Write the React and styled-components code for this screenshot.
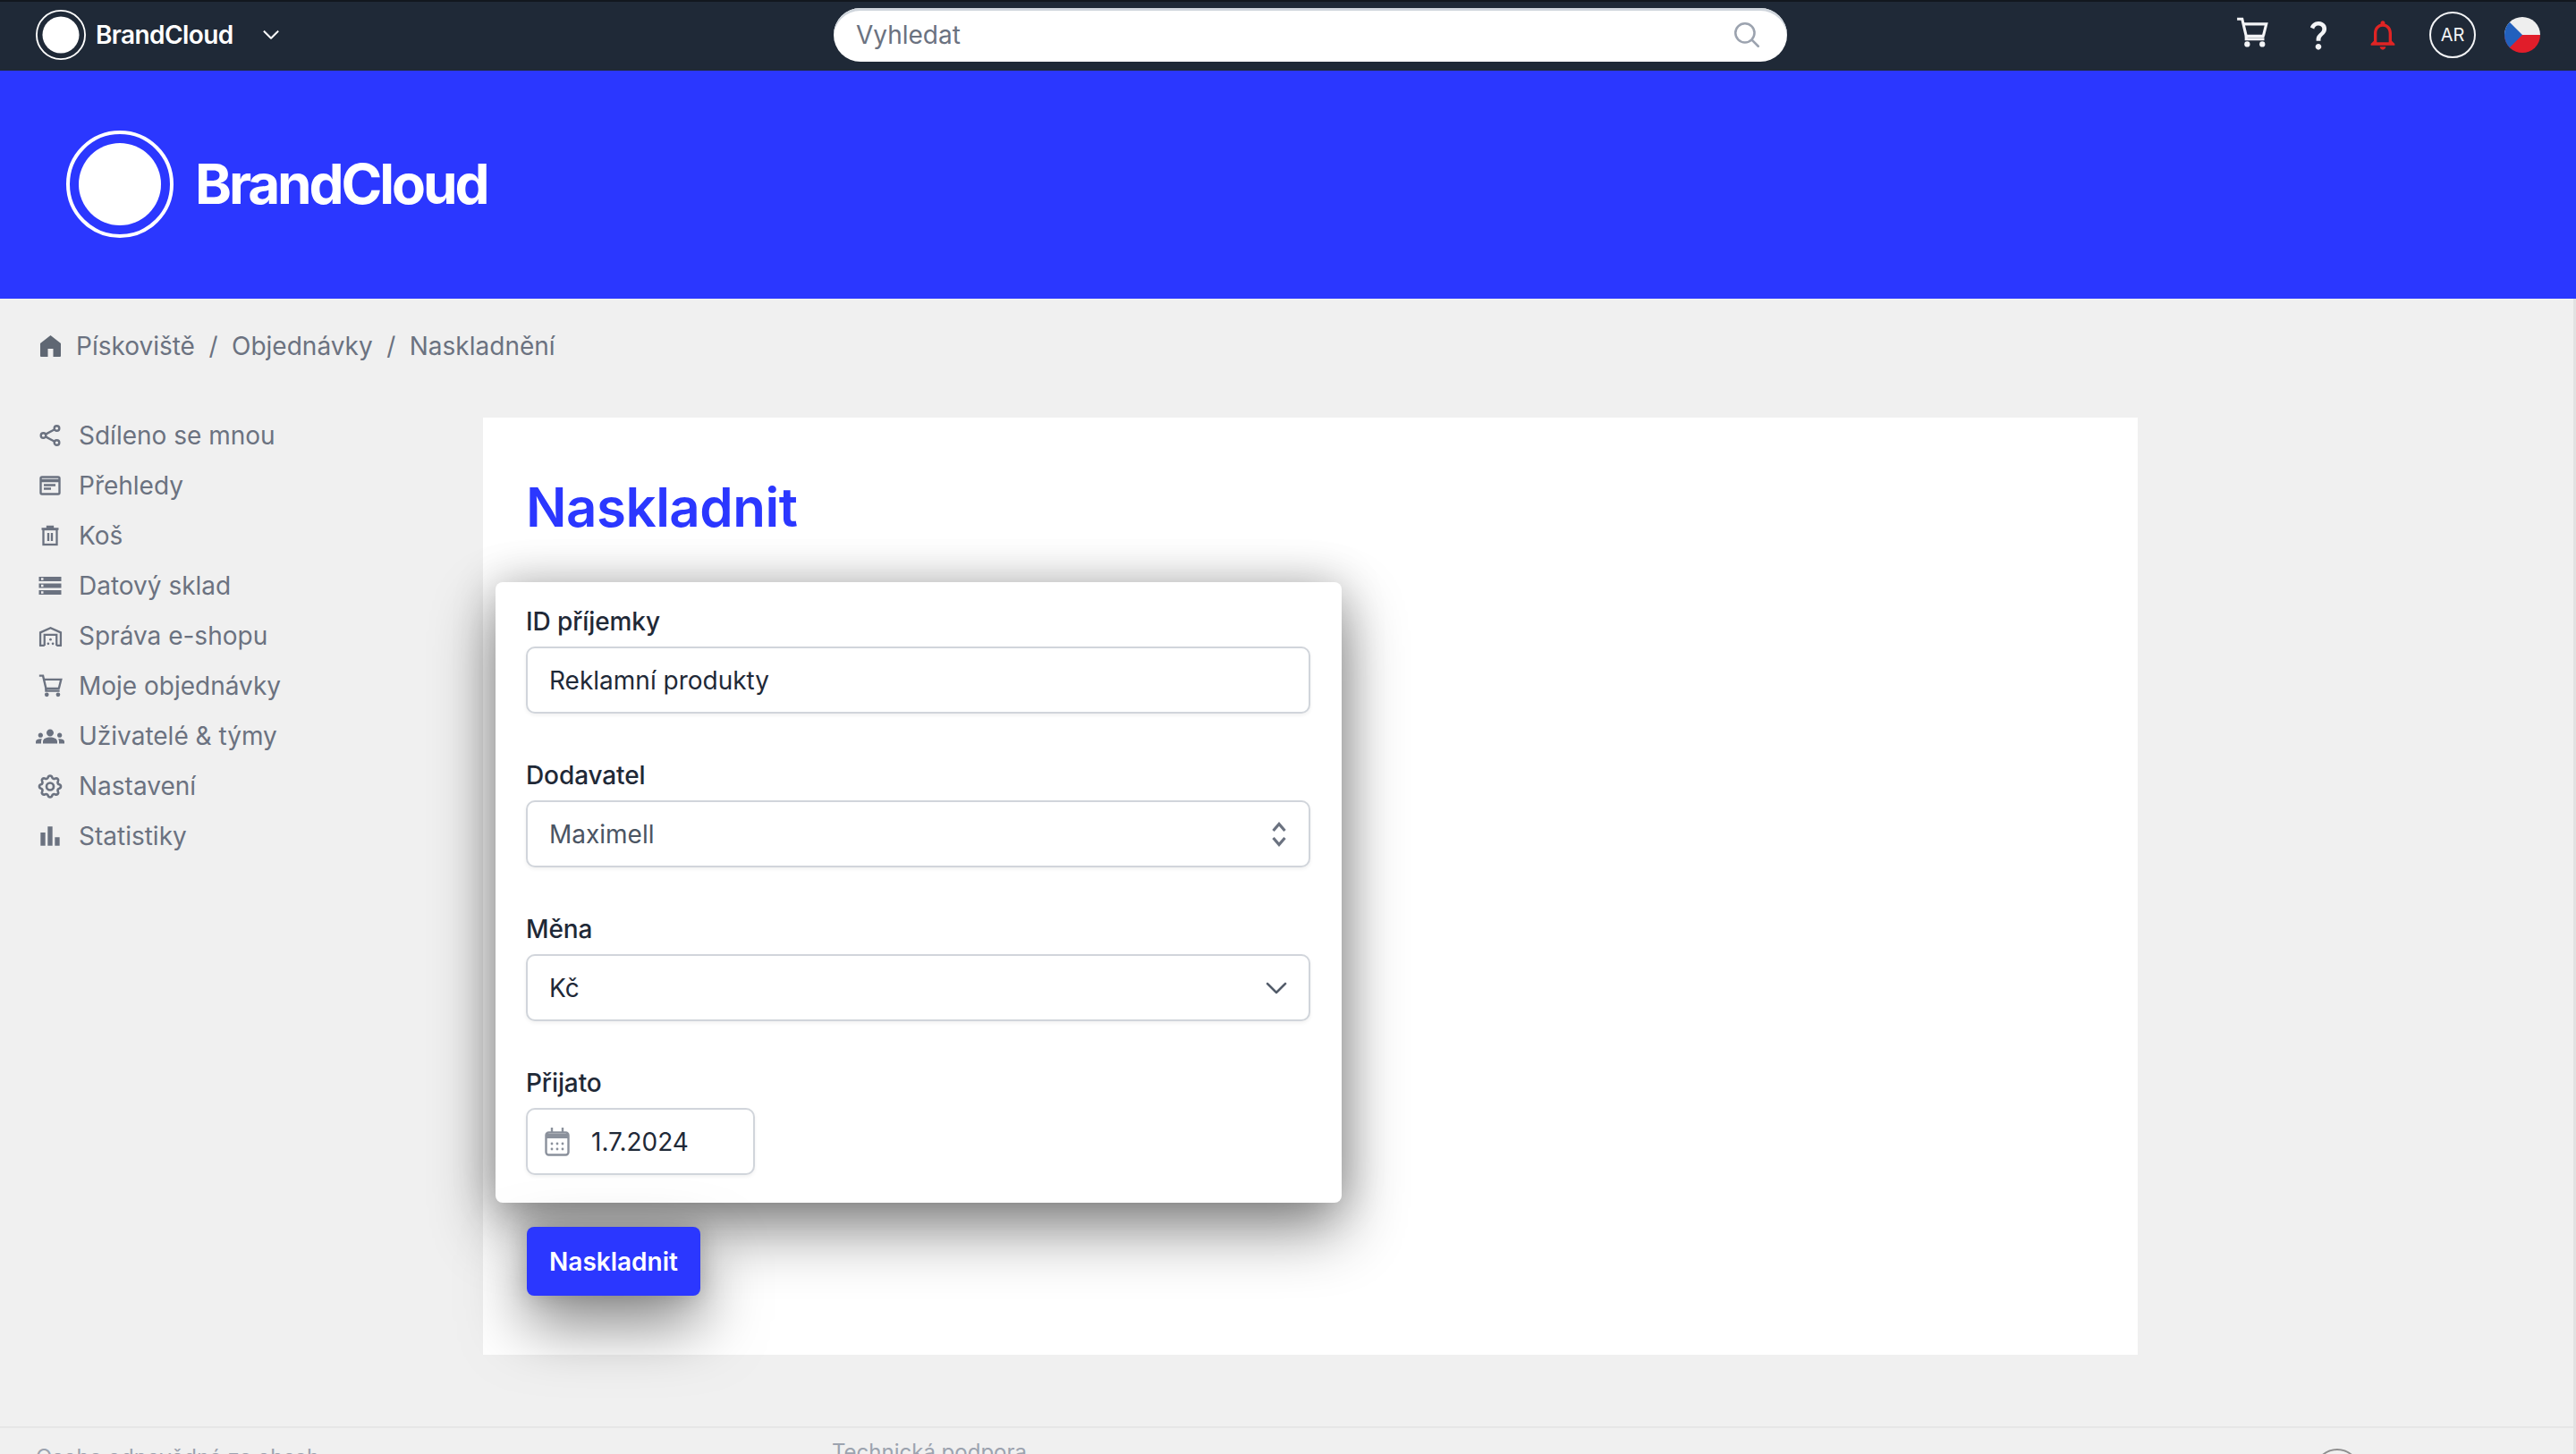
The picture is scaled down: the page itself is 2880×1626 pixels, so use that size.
import React from 'react';
import styled, { createGlobalStyle } from 'styled-components';
import { HiChevronDown, HiOutlineMagnifyingGlass } from 'react-icons/hi2';
import { HiOutlineCog } from 'react-icons/hi';
import { MdStorage, MdGroups, MdBarChart, MdOutlineNotifications, MdQuestionMark } from 'react-icons/md';

const GlobalStyle = createGlobalStyle`
  html, body { margin: 0; padding: 0; background: #f0f0f0; }
  body { font-family: Inter, "Liberation Sans", sans-serif; }
  * { box-sizing: border-box; }
`;

function Logo({ size, gap }) {
  return (
    <svg width={size} height={size} viewBox="0 0 120 120">
      <circle cx="60" cy="60" r="58" fill="none" stroke="#fff" strokeWidth="4" />
      <circle cx="60" cy="60" r={gap} fill="#fff" />
    </svg>
  );
}

function HomeIcon() {
  return (
    <svg width="23" height="24" viewBox="0 0 23 24">
      <path
        fill="#5f6773"
        d="M11.500 0L23 9v14a1 1 0 0 1-1 1h-7.500v-9h-6v9H1a1 1 0 0 1-1-1V9z"
      />
    </svg>
  );
}

function CartIcon({ size }) {
  return (
    <svg width={size} height={size} viewBox="0 0 32 32" fill="none" stroke="currentColor" strokeWidth="2.8">
      <path d="M1 2h5l4 17h18" />
      <path d="M7 7h23l-3 12" />
      <circle cx="11" cy="27" r="2.8" fill="currentColor" stroke="none" />
      <circle cx="26" cy="27" r="2.8" fill="currentColor" stroke="none" />
      <path d="M10 19v3h18" />
    </svg>
  );
}

function ShareIcon() {
  return (
    <svg width="24" height="24" viewBox="0 0 24 24" fill="none" stroke="currentColor" strokeWidth="2.4">
      <circle cx="19.500" cy="4" r="2.800" />
      <circle cx="4.500" cy="12" r="2.800" />
      <circle cx="19.500" cy="20" r="2.800" />
      <path d="M7 10.600l10-5.300M7 13.400l10 5.300" />
    </svg>
  );
}

function ReportIcon() {
  return (
    <svg width="24" height="24" viewBox="0 0 24 24" fill="none" stroke="currentColor" strokeWidth="2.4">
      <rect x="1.500" y="2.500" width="21" height="19" rx="1.500" />
      <path d="M1.500 6.500h21" strokeWidth="3.500" />
      <path d="M5 11.500h13M5 15.500h8" />
    </svg>
  );
}

function TrashIcon() {
  return (
    <svg width="24" height="24" viewBox="0 0 24 24" fill="none" stroke="currentColor" strokeWidth="2.300">
      <path d="M2.500 4.500h19M9 4.500V2h6v2.500" />
      <rect x="4.500" y="5" width="15" height="17" />
      <path d="M10 9v9M14 9v9" />
    </svg>
  );
}

function StoreIcon() {
  return (
    <svg width="27" height="25" viewBox="0 0 26 24" fill="none" stroke="currentColor" strokeWidth="2.200">
      <path d="M2 22V8l11-5 11 5v14" />
      <path d="M6.500 22V10.500h13V22" />
      <path d="M1 22h5.500M19.500 22H25" />
      <circle cx="13" cy="15.500" r="1.300" fill="currentColor" stroke="none" />
      <circle cx="10.500" cy="20" r="1.300" fill="currentColor" stroke="none" />
      <circle cx="15.500" cy="20" r="1.300" fill="currentColor" stroke="none" />
    </svg>
  );
}

function UpDownIcon() {
  return (
    <svg width="18" height="28" viewBox="0 0 18 28" fill="none" stroke="#6b7280" strokeWidth="3.200">
      <path d="M2.500 10L9 2.500 15.500 10" />
      <path d="M2.500 18L9 25.500 15.500 18" />
    </svg>
  );
}

function CalendarIcon() {
  return (
    <svg width="28" height="32" viewBox="0 0 28 32" fill="none" stroke="#8b919c" strokeWidth="2.400">
      <rect x="1.500" y="5.500" width="25" height="25" rx="3" />
      <path d="M1.500 9.500h25" strokeWidth="5" />
      <path d="M8 0v6M20 0v6" />
      <g fill="#8b919c" stroke="none">
        <circle cx="8" cy="18" r="1.400" />
        <circle cx="14" cy="18" r="1.400" />
        <circle cx="20" cy="18" r="1.400" />
        <circle cx="8" cy="24" r="1.400" />
        <circle cx="14" cy="24" r="1.400" />
        <circle cx="20" cy="24" r="1.400" />
      </g>
    </svg>
  );
}

function FlagIcon() {
  return (
    <svg width="40" height="40" viewBox="0 0 40 40">
      <defs>
        <clipPath id="flag-clip"><circle cx="20" cy="20" r="20" /></clipPath>
      </defs>
      <g clipPath="url(#flag-clip)">
        <rect width="40" height="20" fill="#eeeeee" />
        <rect y="20" width="40" height="20" fill="#e11d2a" />
        <path d="M0 0 L20 20 L0 40 Z" fill="#2260bd" />
      </g>
    </svg>
  );
}

const menu = [
  { label: 'Sdíleno se mnou', icon: <ShareIcon /> },
  { label: 'Přehledy', icon: <ReportIcon /> },
  { label: 'Koš', icon: <TrashIcon /> },
  { label: 'Datový sklad', icon: <MdStorage size={30} /> },
  { label: 'Správa e-shopu', icon: <StoreIcon /> },
  { label: 'Moje objednávky', icon: <CartIcon size={27} /> },
  { label: 'Uživatelé & týmy', icon: <MdGroups size={33} /> },
  { label: 'Nastavení', icon: <HiOutlineCog size={33} /> },
  { label: 'Statistiky', icon: <MdBarChart size={32} /> },
];

function App() {
  return (
    <Page>
      <GlobalStyle />
      <TopBar>
        <Brand>
          <Logo size={56} gap={44} />
          <BrandName>BrandCloud</BrandName>
          <BrandChevron><HiChevronDown size={24} stroke="currentColor" strokeWidth={0.8} /></BrandChevron>
        </Brand>
        <Search>
          <SearchText>Vyhledat</SearchText>
          <HiOutlineMagnifyingGlass size={34} color="#9ca3af" strokeWidth={1.8} />
        </Search>
        <TopActions>
          <CartSlot><CartIcon size={36} /></CartSlot>
          <TopIcon><MdQuestionMark size={40} /></TopIcon>
          <TopIcon $alert><MdOutlineNotifications size={40} /></TopIcon>
          <Avatar>AR</Avatar>
          <FlagIcon />
        </TopActions>
      </TopBar>

      <Hero>
        <Logo size={120} gap={46} />
        <HeroName>BrandCloud</HeroName>
      </Hero>

      <Lower>
        <Breadcrumb>
          <HomeSlot><HomeIcon /></HomeSlot>
          <span>Pískoviště</span>
          <Sep>/</Sep>
          <span>Objednávky</span>
          <Sep>/</Sep>
          <span>Naskladnění</span>
        </Breadcrumb>

        <Body>
          <Sidebar>
            {menu.map((item) => (
              <MenuItem key={item.label}>
                <MenuIcon>{item.icon}</MenuIcon>
                {item.label}
              </MenuItem>
            ))}
          </Sidebar>

          <Card>
            <Title>Naskladnit</Title>
            <Panel>
              <Field>
                <Label>ID příjemky</Label>
                <TextInput readOnly value="Reklamní produkty" />
              </Field>
              <Field>
                <Label>Dodavatel</Label>
                <SelectBox $muted>
                  Maximell
                  <UpDownIcon />
                </SelectBox>
              </Field>
              <Field>
                <Label>Měna</Label>
                <SelectBox>
                  Kč
                  <SelectChevron><HiChevronDown size={32} stroke="currentColor" strokeWidth={0.5} /></SelectChevron>
                </SelectBox>
              </Field>
              <Field>
                <Label>Přijato</Label>
                <DateBox>
                  <CalendarIcon />
                  1.7.2024
                </DateBox>
              </Field>
            </Panel>
            <SubmitButton>Naskladnit</SubmitButton>
          </Card>
        </Body>

        <Footer>
          <FooterLeft>Osoba odpovědná za obsah</FooterLeft>
          <FooterMiddle>Technická podpora</FooterMiddle>
          <FooterBadge />
        </Footer>
      </Lower>
    </Page>
  );
}

const Page = styled.div`
  height: 1626px;
  overflow: hidden;
  background: #f0f0f0;
`;

const TopBar = styled.header`
  display: grid;
  grid-template-columns: 932px 1066px 1fr;
  align-items: center;
  height: 79px;
  padding-bottom: 3px;
  background: #1f2937;
  border-top: 2px solid #12171f;
`;

const Brand = styled.div`
  display: flex;
  align-items: center;
  padding-left: 40px;
  color: #fff;
`;

const BrandName = styled.div`
  margin-left: 11px;
  font-size: 28px;
  font-weight: 600;
  letter-spacing: -0.6px;
`;

const BrandChevron = styled.div`
  display: flex;
  margin-left: 30px;
`;

const Search = styled.div`
  display: flex;
  align-items: center;
  justify-content: space-between;
  height: 60px;
  padding: 0 28px 0 25px;
  background: #fff;
  box-shadow: inset 0 3px 0 #cfd5dc;
  border-radius: 30px;
`;

const SearchText = styled.span`
  font-size: 28px;
  color: #6b7280;
`;

const TopActions = styled.div`
  display: flex;
  align-items: center;
  justify-content: flex-end;
  gap: 32px;
  padding-right: 40px;
`;

const TopIcon = styled.div`
  display: flex;
  color: ${(p) => (p.$alert ? '#e02424' : '#f3f4f6')};
`;

const CartSlot = styled.div`
  display: flex;
  margin: -4px 4px 0 0;
  color: #f3f4f6;
`;

const Avatar = styled.div`
  display: flex;
  align-items: center;
  justify-content: center;
  width: 52px;
  height: 52px;
  border: 2px solid #f3f4f6;
  border-radius: 50%;
  color: #f3f4f6;
  font-size: 20px;
`;

const Hero = styled.section`
  display: flex;
  align-items: center;
  gap: 24px;
  height: 255px;
  padding: 0 0 2px 74px;
  background: #2b37ff;
`;

const HeroName = styled.div`
  color: #fff;
  font-size: 62px;
  font-weight: 700;
  letter-spacing: -3.1px;
`;

const Lower = styled.div`
  border-right: 3px solid #e2e2e2;
`;

const Breadcrumb = styled.nav`
  display: flex;
  align-items: center;
  height: 125px;
  padding: 0 0 19px 45px;
  color: #6b7280;
  font-size: 28px;
`;

const HomeSlot = styled.span`
  display: flex;
  margin-right: 17px;
`;

const Sep = styled.span`
  margin: 0 15.5px;
`;

const Body = styled.main`
  display: flex;
  align-items: flex-start;
`;

const Sidebar = styled.aside`
  width: 540px;
  padding-left: 40px;
`;

const MenuItem = styled.div`
  display: flex;
  align-items: center;
  height: 56px;
  color: #6b7280;
  font-size: 28px;
`;

const MenuIcon = styled.span`
  display: flex;
  align-items: center;
  justify-content: center;
  width: 32px;
  margin-right: 16px;
`;

const Card = styled.section`
  width: 1850px;
  height: 1048px;
  margin-top: 8px;
  padding-top: 64px;
  background: #fff;
`;

const Title = styled.h1`
  margin: 0 0 48px 48px;
  color: #2b37ff;
  font-size: 60px;
  font-weight: 600;
  letter-spacing: -0.5px;
  line-height: 72px;
`;

const Panel = styled.div`
  display: flex;
  flex-direction: column;
  gap: 48px;
  width: 946px;
  height: 694px;
  margin-left: 14px;
  padding: 23px 35px 0 34px;
  background: #fff;
  border-radius: 8px;
  box-shadow: 0 30px 70px rgba(0, 0, 0, 0.46), 0 0 50px rgba(0, 0, 0, 0.2);
`;

const Field = styled.div`
  display: flex;
  flex-direction: column;
`;

const Label = styled.label`
  margin-bottom: 7px;
  color: #1f2937;
  font-size: 28px;
  font-weight: 500;
  letter-spacing: -0.1px;
  line-height: 42px;
`;

const TextInput = styled.input`
  width: 100%;
  height: 75px;
  padding: 0 24px;
  border: 2px solid #d1d5db;
  border-radius: 10px;
  outline: none;
  background: #fff;
  box-shadow: 0 2px 4px rgba(0, 0, 0, 0.06);
  color: #1f2937;
  font-family: inherit;
  font-size: 28px;
`;

const SelectBox = styled.div`
  display: flex;
  align-items: center;
  justify-content: space-between;
  height: 75px;
  padding: 0 24px;
  border: 2px solid #d1d5db;
  border-radius: 10px;
  background: #fff;
  box-shadow: 0 2px 4px rgba(0, 0, 0, 0.06);
  color: ${(p) => (p.$muted ? '#4b5563' : '#1f2937')};
  font-size: 28px;
`;

const SelectChevron = styled.span`
  display: flex;
  margin-right: -4px;
  color: #4b5563;
`;

const DateBox = styled.div`
  display: flex;
  align-items: center;
  gap: 24px;
  width: 256px;
  height: 75px;
  padding: 0 0 0 19px;
  border: 2px solid #d1d5db;
  border-radius: 10px;
  background: #fff;
  box-shadow: 0 2px 4px rgba(0, 0, 0, 0.06);
  color: #1f2937;
  font-size: 28px;
`;

const SubmitButton = styled.button`
  display: block;
  width: 194px;
  height: 77px;
  margin: 27px 0 0 49px;
  border: 0;
  border-radius: 8px;
  background: #2b37ff;
  box-shadow: 0 30px 70px rgba(0, 0, 0, 0.5), 0 0 24px rgba(0, 0, 0, 0.18);
  color: #fff;
  font-family: inherit;
  font-size: 28px;
  font-weight: 600;
`;

const Footer = styled.footer`
  position: relative;
  display: grid;
  grid-template-columns: 890px 1fr;
  margin-top: 80px;
  padding: 0 0 0 40px;
  border-top: 2px solid #e6e6e6;
  color: #9ca3af;
  font-size: 24px;
`;

const FooterLeft = styled.div`
  padding-top: 18px;
`;

const FooterMiddle = styled.div`
  padding-top: 12px;
`;

const FooterBadge = styled.div`
  position: absolute;
  top: 23px;
  left: 2587px;
  width: 52px;
  height: 52px;
  border: 2px solid #8f8f8f;
  border-radius: 50%;
`;

export default App;
